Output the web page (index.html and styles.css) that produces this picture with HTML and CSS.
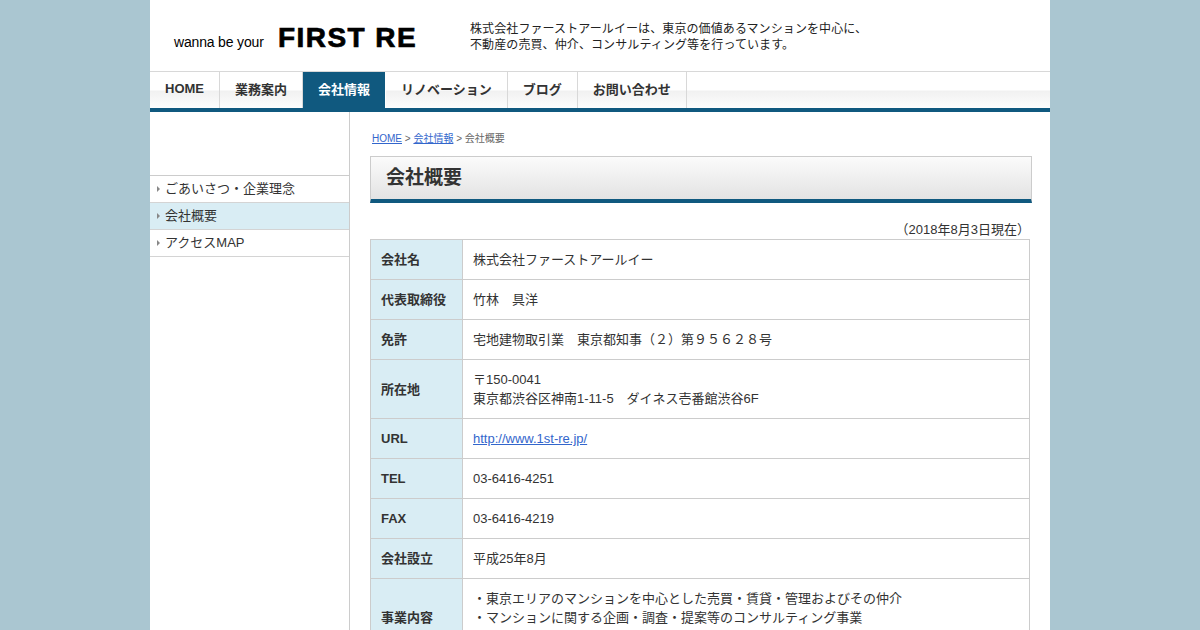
FILE: index.html
```html
<!DOCTYPE html>
<html lang="ja">
<head>
<meta charset="utf-8">
<title>会社概要</title>
<link rel="stylesheet" href="styles.css">
</head>
<body>
<div class="wrap">
  <header class="head">
    <div class="logo"><span class="logo-sub">wanna be your</span><span class="logo-main">FIRST RE</span></div>
    <p class="lead">株式会社ファーストアールイーは、東京の価値あるマンションを中心に、<br>不動産の売買、仲介、コンサルティング等を行っています。</p>
  </header>
  <nav class="nav">
    <a class="nav-item nav-home">HOME</a>
    <a class="nav-item">業務案内</a>
    <a class="nav-item nav-active">会社情報</a>
    <a class="nav-item">リノベーション</a>
    <a class="nav-item">ブログ</a>
    <a class="nav-item">お問い合わせ</a>
  </nav>
  <div class="body">
    <aside class="side">
      <ul class="menu">
        <li class="menu-item"><span class="arrow"></span>ごあいさつ・企業理念</li>
        <li class="menu-item menu-active"><span class="arrow"></span>会社概要</li>
        <li class="menu-item"><span class="arrow"></span>アクセスMAP</li>
      </ul>
    </aside>
    <main class="main">
      <p class="crumb"><a href="#">HOME</a> &gt; <a href="#">会社情報</a> &gt; 会社概要</p>
      <h1 class="title">会社概要</h1>
      <p class="date">（2018年8月3日現在）</p>
      <table class="info">
        <tr><th>会社名</th><td>株式会社ファーストアールイー</td></tr>
        <tr><th>代表取締役</th><td>竹林　具洋</td></tr>
        <tr><th>免許</th><td>宅地建物取引業　東京都知事（２）第９５６２８号</td></tr>
        <tr><th>所在地</th><td>〒150-0041<br>東京都渋谷区神南1-11-5　ダイネス壱番館渋谷6F</td></tr>
        <tr><th>URL</th><td><a href="#">http://www.1st-re.jp/</a></td></tr>
        <tr><th>TEL</th><td>03-6416-4251</td></tr>
        <tr><th>FAX</th><td>03-6416-4219</td></tr>
        <tr><th>会社設立</th><td>平成25年8月</td></tr>
        <tr><th>事業内容</th><td>・東京エリアのマンションを中心とした売買・賃貸・管理およびその仲介<br>・マンションに関する企画・調査・提案等のコンサルティング事業<br>&nbsp;</td></tr>
      </table>
    </main>
  </div>
</div>
</body>
</html>
```

FILE: styles.css
```css
* { box-sizing: border-box; }
html, body { margin: 0; padding: 0; }
body {
  background: #aac6d1;
  color: #333;
  font-family: "Liberation Sans", "Noto Sans CJK JP", sans-serif;
  font-size: 13px;
  line-height: 19px;
}
a { color: #3366cc; text-decoration: underline; }
.wrap { width: 900px; margin: 0 auto; background: #fff; }

.head { height: 71px; display: flex; align-items: flex-start; padding-left: 24px; }
.logo { width: 296px; height: 71px; display: flex; align-items: baseline; padding-top: 21px; color: #000; }
.logo-sub { font-size: 14px; width: 104px; letter-spacing: -0.17px; }
.logo-main { font-size: 28px; font-weight: 700; letter-spacing: 1.45px; line-height: 33px; -webkit-text-stroke: 0.7px #000; }
.lead { margin: 21px 0 0; font-size: 12px; line-height: 16px; letter-spacing: 0.1px; color: #222; }

.nav {
  height: 41px;
  display: flex;
  border-top: 1px solid #d8d8d8;
  border-bottom: 4px solid #10597f;
  background: linear-gradient(#fff 0, #fff 18px, #f1f1f1 19px, #fdfdfd 36px);
}
.nav-item {
  padding: 0 15px;
  border-right: 1px solid #d8d8d8;
  font-size: 13px;
  font-weight: 700;
  line-height: 35px;
  color: #333;
  text-decoration: none;
}
.nav-home { line-height: 33px; }
.nav-active { background: #10597f; color: #fff; border-right-color: #fff; }

.body { display: flex; min-height: 518px; }
.side { width: 200px; flex: none; padding-top: 63px; border-right: 1px solid #ccc; }
.menu { list-style: none; margin: 0; padding: 0; border-top: 1px solid #ccc; }
.menu-item {
  height: 27px;
  display: flex;
  align-items: center;
  padding: 0 0 1px 7px;
  border-bottom: 1px solid #d4d4d4;
  line-height: 25px;
  color: #333;
}
.menu-active { background: #d9edf4; }
.arrow {
  width: 0;
  height: 0;
  margin-right: 5px;
  border-left: 3px solid #888;
  border-top: 3px solid transparent;
  border-bottom: 3px solid transparent;
}

.main { flex: 1; min-width: 0; padding: 18px 18px 0 20px; }
.crumb { margin: 0 0 0 2px; font-size: 10px; line-height: 18px; color: #666; }
.title {
  width: 662px;
  height: 47px;
  margin: 8px 0 0;
  padding: 0 0 0 15px;
  border: 1px solid #ccc;
  border-bottom: 4px solid #10597f;
  background: linear-gradient(#fbfbfb, #e3e3e3);
  font-size: 19px;
  font-weight: 700;
  line-height: 42px;
  color: #333;
}
.date { margin: 17px 0 0; width: 660px; text-align: right; line-height: 19px; }
.info { width: 660px; margin: 0; border-collapse: collapse; table-layout: fixed; }
.info th, .info td { border: 1px solid #ccc; padding: 10px; line-height: 19px; text-align: left; font-size: 13px; }
.info th { width: 92px; background: #d9edf4; font-weight: 700; }
```
